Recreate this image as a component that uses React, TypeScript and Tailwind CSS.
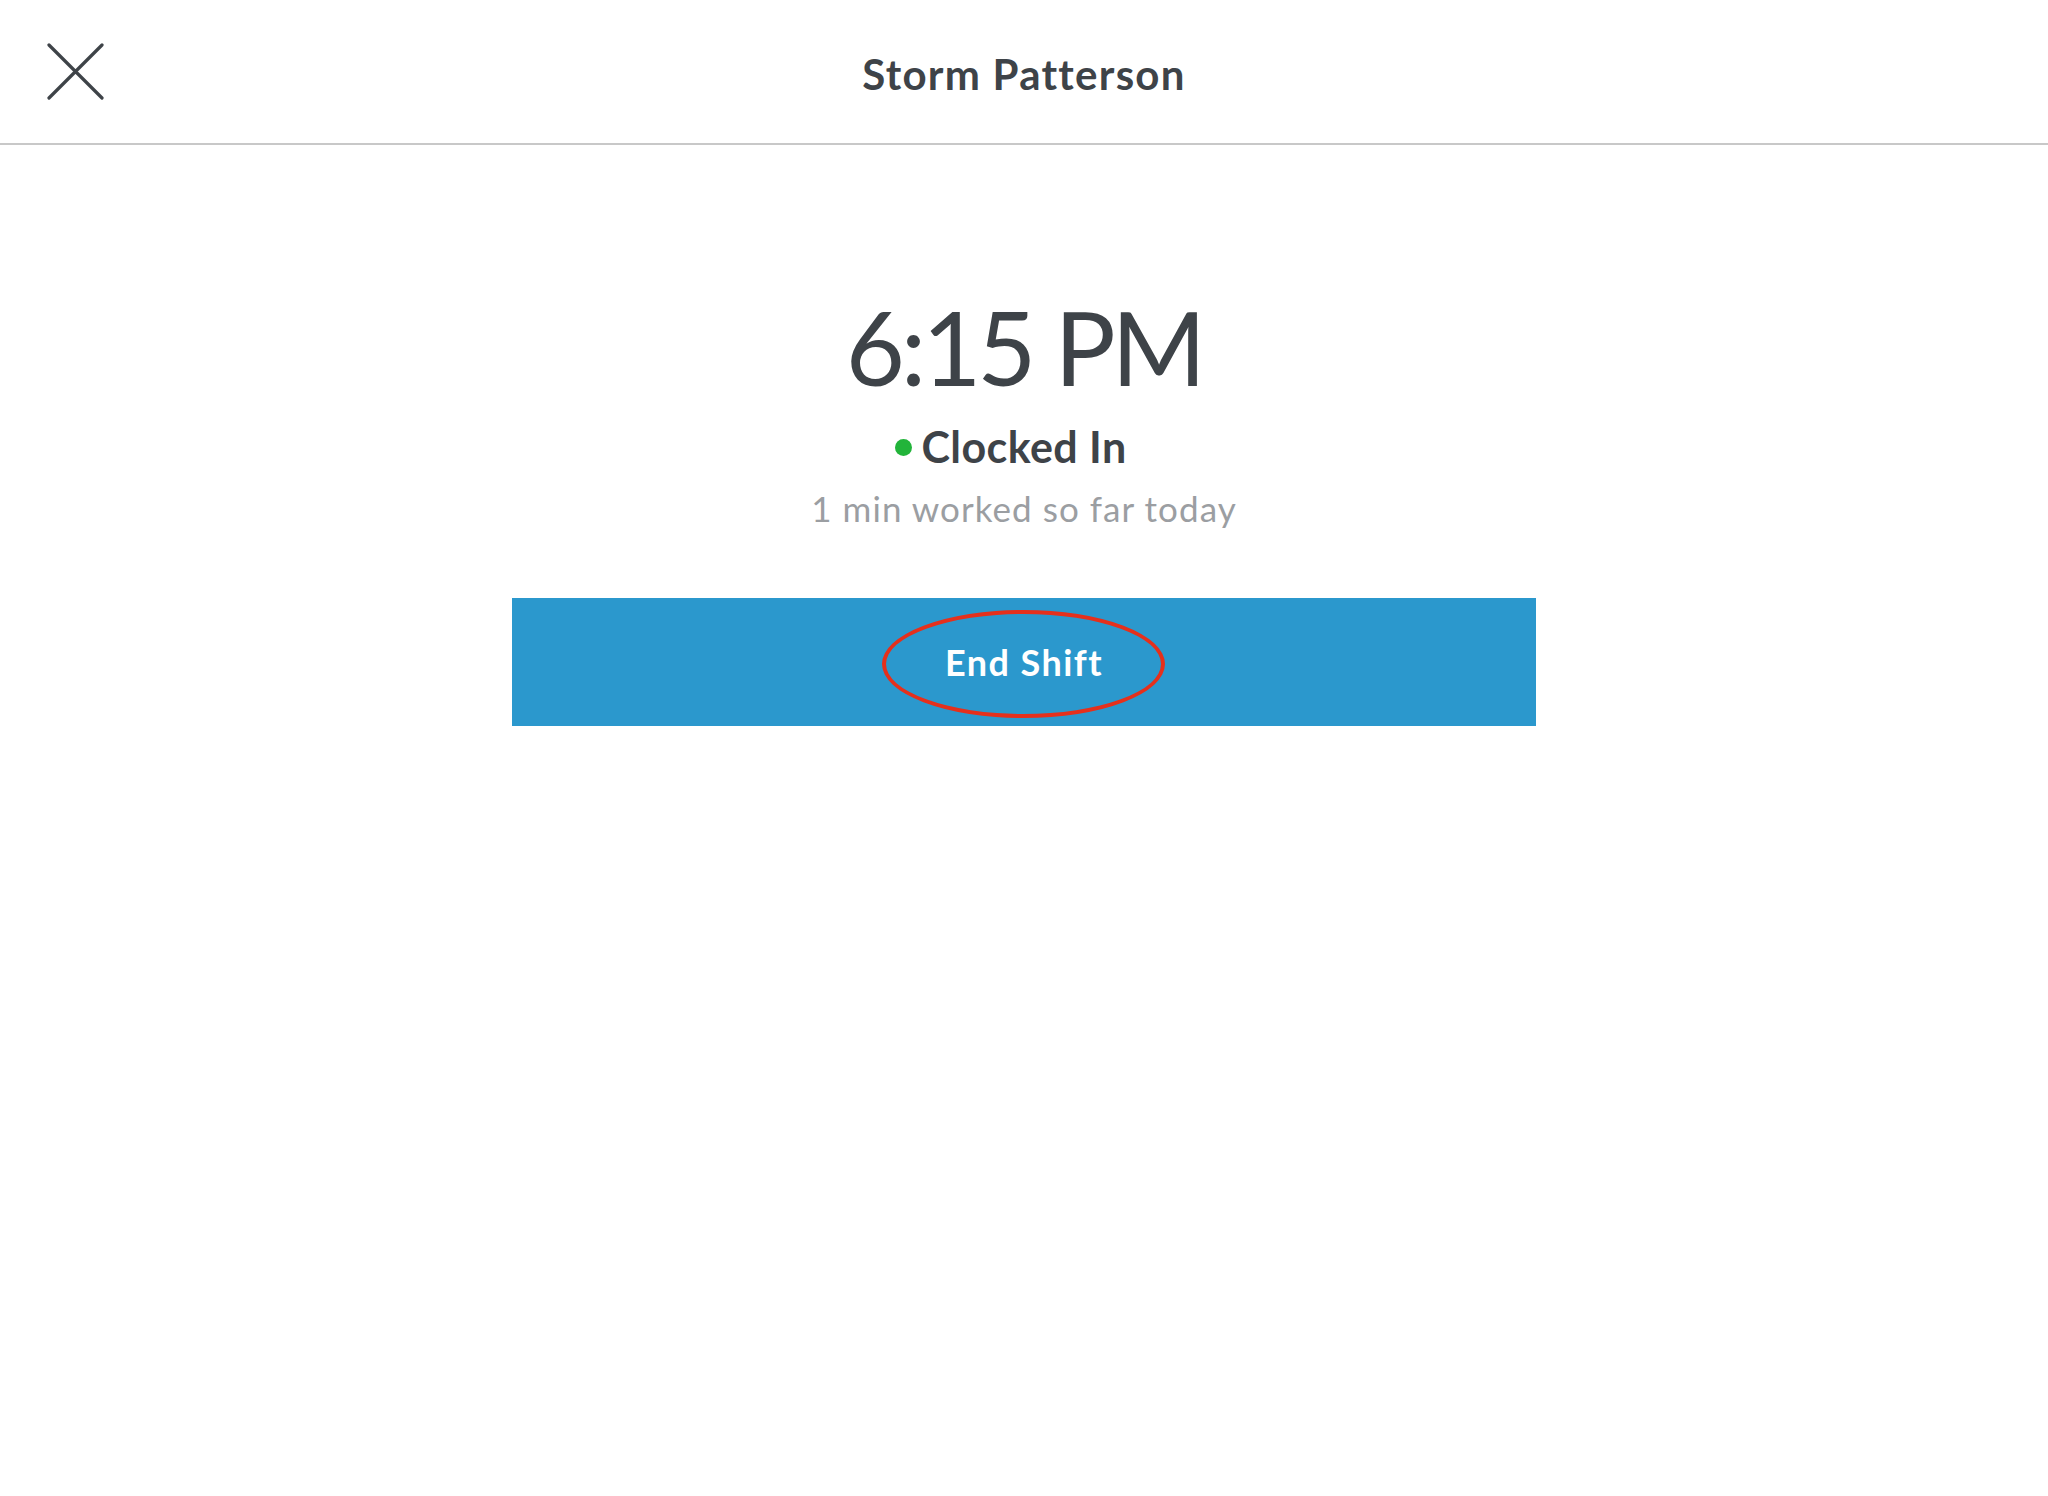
export default function App() {
  return (
    <div className="min-h-[1496px] w-full bg-white font-['Lato','Open_Sans',sans-serif] text-[#3e4348]">
      {/* Header */}
      <header className="relative flex h-[145px] items-center justify-center border-b-2 border-[#c8c8c8] pt-[4px]">
        <button className="absolute left-[47px] top-[43px] h-[57px] w-[57px] text-[#3e4348]">
          <svg viewBox="0 0 57 57" className="h-full w-full" fill="none" stroke="currentColor" strokeWidth={3.2} strokeLinecap="round">
            <path d="M2 2L55 55M55 2L2 55" />
          </svg>
        </button>
        <h1 className="text-[42px] font-bold leading-none tracking-[0.03em]">Storm Patterson</h1>
      </header>

      {/* Shift status */}
      <main className="flex flex-col items-center pt-[151px]">
        <div className="text-[102px] font-normal leading-none tracking-[-0.04em]">6:15 PM</div>
        <div className="relative mt-[27px]">
          <span className="absolute left-[-26px] top-[14px] h-[17px] w-[17px] rounded-full bg-[#22b43a]" />
          <span className="text-[43px] font-bold leading-none tracking-[0.01em]">Clocked In</span>
        </div>
        <div className="mt-[22px] text-[35px] leading-none tracking-[0.03em] text-[#9b9ea2]">1 min worked so far today</div>

        <button className="relative mt-[72px] flex h-[128px] w-[1024px] items-center justify-center bg-[#2b98cd] text-[36px] font-bold leading-none tracking-[0.04em] text-white">
          End Shift
          <span className="pointer-events-none absolute left-[370px] top-[12px] h-[108px] w-[283px] rounded-[50%] border-[4px] border-[#e5301c]" />
        </button>
      </main>
    </div>
  );
}
